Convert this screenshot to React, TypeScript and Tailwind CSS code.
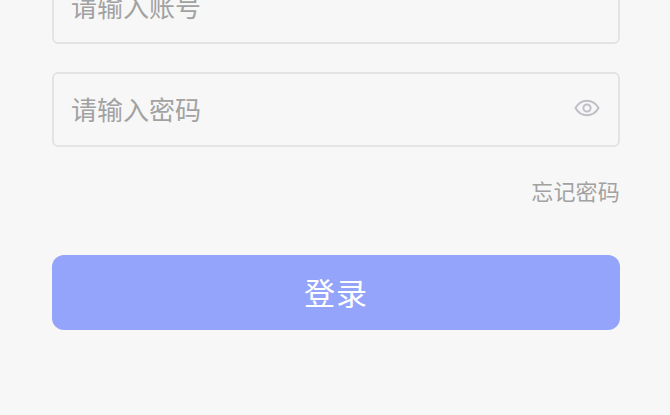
export default function App() {
  return (
    <main className="h-[415px] w-[670px] overflow-hidden bg-[#f7f7f7] pl-[52px] pr-[50px] font-['Noto_Sans_CJK_SC',sans-serif]">
      <form className="flex flex-col">
        <label className="-mt-[31px] flex h-[75px] items-center rounded-md border-2 border-[#e4e4e5] px-[17px] pb-[2px] text-[26px] text-[#a2a2a2]">
          <span>请输入账号</span>
        </label>
        <label className="mt-[28px] flex h-[75px] items-center justify-between rounded-md border-2 border-[#e4e4e5] px-[17px] pb-[2px] text-[26px] text-[#a2a2a2]">
          <span>请输入密码</span>
          <svg className="mb-[2px] h-[26px] w-[28px]" viewBox="0 0 28 26" fill="none" stroke="#bfbfc6" strokeWidth="2" strokeLinejoin="round">
            <path d="M2.500 13C5 8.500 9 5.700 14 5.700S23 8.500 25.500 13C23 17.500 19 20.300 14 20.300S5 17.500 2.500 13Z" />
            <circle cx="14" cy="13" r="3.600" />
          </svg>
        </label>
        <a className="mt-[27px] self-end text-[22px] leading-[33px] tracking-[0.2px] text-[#a2a2a2]">忘记密码</a>
        <button type="button" className="mt-[48px] h-[75px] rounded-xl bg-[#93a4fa] pb-[2px] text-[31px] leading-none tracking-[1px] text-white">登录</button>
      </form>
    </main>
  );
}
